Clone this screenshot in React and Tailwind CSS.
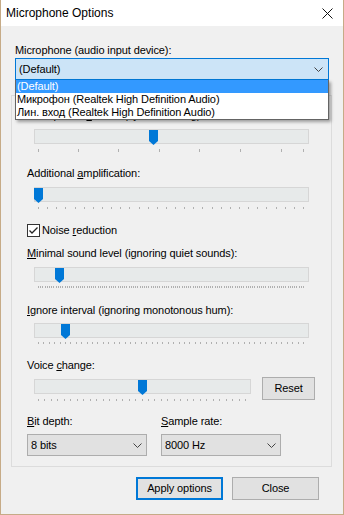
import React from "react";

const FONT = { fontFamily: '"Liberation Sans", Arial, sans-serif' };

const even = (from, to, n) =>
  Array.from({ length: n + 1 }, (_, i) => from + ((to - from) * i) / n);

const SLIDER_1_TICKS = [5, 45, 85, 126, 166, 207, 248, 270];

const Chevron = ({ className }) => (
  <svg width="9" height="5" viewBox="0 0 9 5" className={className}>
    <path d="M0.5 0.5 L4.5 4.5 L8.5 0.5" fill="none" stroke="#444" strokeWidth="1" />
  </svg>
);

// trackbar: channel, thumb laid over it, tick marks under it
const Slider = ({ width, thumb, ticks, tickH = 2, tickGap = 5, className }) => (
  <div className={"flex flex-col " + className}>
    <div className="relative h-[15px] border border-[#d6d6d6] bg-[#e7eaea]">
      <svg
        width="9"
        height="15"
        viewBox="0 0 9 15"
        className="absolute top-0"
        style={{ left: thumb - 1 }}
      >
        <path d="M0 0H9V11L4.5 15L0 11Z" fill="#0078d7" />
      </svg>
    </div>
    <svg
      width={width}
      height={tickH}
      style={{ marginTop: tickGap }}
      shapeRendering="crispEdges"
    >
      {ticks.map((x, i) => (
        <rect key={i} x={Math.round(x) - 1} y="0" width="1" height={tickH} fill="#b0b0b0" />
      ))}
    </svg>
  </div>
);

const Label = ({ children, className = "" }) => (
  <div className={"h-[15px] leading-[15px] whitespace-nowrap " + className}>{children}</div>
);

const Combo = ({ value }) => (
  <div className="flex h-[22px] w-[120px] items-center justify-between border border-[#adadad] bg-[#e1e1e1] pl-[3px] pr-[4px]">
    <span>{value}</span>
    <Chevron />
  </div>
);

export default function App() {
  return (
    <div
      className="flex h-[515px] w-[344px] flex-col border-x border-b border-[#c6ab87] bg-[#f0f0f0] text-[11px] tracking-[-0.1px] text-black"
      style={FONT}
    >
      {/* title bar */}
      <div className="flex h-[26px] shrink-0 items-center justify-between bg-white pl-[5px] pr-[10px]">
        <span className="text-[12px] tracking-normal">Microphone Options</span>
        <svg width="11" height="11" viewBox="0 0 11 11">
          <path d="M0.5 0.5 L10.5 10.5 M10.5 0.5 L0.5 10.5" stroke="#111" strokeWidth="1" />
        </svg>
      </div>

      <div className="flex flex-col">
        <Label className="ml-[14px] mt-[17px]">Microphone (audio input device):</Label>

        {/* open device combo */}
        <div className="relative z-10 ml-[14px] flex h-[22px] w-[314px] items-center justify-between border border-[#0078d7] bg-[#cce4f7] pl-[3px] pr-[5px]">
          <span>(Default)</span>
          <Chevron />
          <div className="absolute left-[-1px] right-[-1px] top-[21px] border border-t-0 border-[#646464] bg-white shadow-[2px_2px_3px_rgba(0,0,0,0.35)]">
            <div className="h-[13px] bg-[#3399ff] pl-[1px] leading-[13px] text-white">(Default)</div>
            <div className="h-[13px] pl-[1px] leading-[13px]">Микрофон (Realtek High Definition Audio)</div>
            <div className="h-[13px] pl-[1px] leading-[13px]">Лин. вход (Realtek High Definition Audio)</div>
          </div>
        </div>

        {/* group box */}
        <div className="ml-[10px] mt-[15px] box-border flex h-[372px] w-[321px] flex-col border border-[#dcdcdc] pl-[15px]">
          <Label className="mt-[12px]">
            Microphone <u>v</u>olume (system setting):
          </Label>
          <Slider
            className="ml-[7px] mt-[6px] w-[275px]"
            width={275}
            thumb={115}
            ticks={SLIDER_1_TICKS}
            tickH={3}
          />

          <Label className="mt-[14px]">
            Additional <u>a</u>mplification:
          </Label>
          <Slider className="ml-[7px] mt-[6px] w-[275px]" width={275} thumb={0} ticks={even(5, 270, 29)} />

          <div className="mt-[14px] flex h-[15px] items-center gap-[2px]">
            <div className="flex h-[13px] w-[13px] items-center justify-center border border-[#333] bg-white">
              <svg width="11" height="11" viewBox="0 0 11 11">
                <path d="M1.5 5.5 L4 8 L9.5 2.5" fill="none" stroke="#222" strokeWidth="1.3" />
              </svg>
            </div>
            <span>
              Noise <u>r</u>eduction
            </span>
          </div>

          <Label className="mt-[8px]">
            <u>M</u>inimal sound level (ignoring quiet sounds):
          </Label>
          <Slider
            className="ml-[7px] mt-[6px] w-[275px]"
            width={275}
            thumb={21}
            ticks={even(5, 270, 120)}
            tickGap={4}
          />

          <Label className="mt-[15px]">
            <u>I</u>gnore interval (ignoring monotonous hum):
          </Label>
          <Slider
            className="ml-[7px] mt-[5px] w-[275px]"
            width={275}
            thumb={27}
            ticks={even(5, 270, 49)}
            tickGap={4}
          />

          <Label className="mt-[14px]">
            Voice <u>c</u>hange:
          </Label>
          <div className="mt-[4px] flex items-start gap-[11px]">
            <Slider className="ml-[7px] mt-[2px] w-[217px]" width={217} thumb={104} ticks={even(5, 212, 32)} />
            <button className="h-[23px] w-[53px] border border-[#adadad] bg-[#e1e1e1]">Reset</button>
          </div>

          <div className="mt-[13px] flex gap-[14px]">
            <div className="flex flex-col gap-[5px]">
              <Label>
                <u>B</u>it depth:
              </Label>
              <Combo value="8 bits" />
            </div>
            <div className="flex flex-col gap-[5px]">
              <Label>
                <u>S</u>ample rate:
              </Label>
              <Combo value="8000 Hz" />
            </div>
          </div>
        </div>

        {/* dialog buttons */}
        <div className="mt-[10px] flex justify-end gap-[9px] pr-[24px]">
          <button className="h-[23px] w-[87px] border-2 border-[#0078d7] bg-[#e1e1e1]">Apply options</button>
          <button className="h-[23px] w-[87px] border border-[#adadad] bg-[#e1e1e1]">Close</button>
        </div>
      </div>
    </div>
  );
}
